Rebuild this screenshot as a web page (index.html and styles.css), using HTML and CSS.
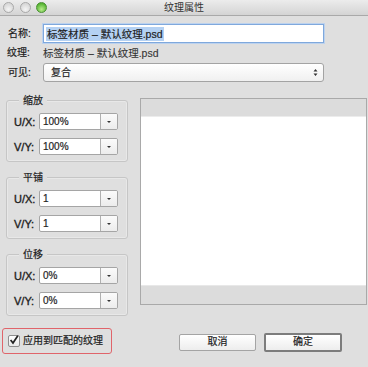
FILE: index.html
```html
<!DOCTYPE html>
<html lang="zh-CN">
<head>
<meta charset="utf-8">
<title>纹理属性</title>
<link rel="stylesheet" href="styles.css">
</head>
<body>
<div class="window">
  <div class="titlebar">
    <div class="lights">
      <span class="light grey"></span>
      <span class="light grey"></span>
      <span class="light green"></span>
    </div>
    <div class="title">纹理属性</div>
    <div></div>
  </div>

  <div class="form">
    <div class="row row-name">
      <span class="label">名称:</span>
      <div class="textfield"><span class="selected">标签材质 – 默认纹理.psd</span></div>
    </div>
    <div class="row row-texture">
      <span class="label">纹理:</span>
      <span class="value">标签材质 – 默认纹理.psd</span>
    </div>
    <div class="row row-visible">
      <span class="label">可见:</span>
      <div class="select">
        <span>复合</span>
        <svg class="updown" width="5" height="9" viewBox="0 0 5 9"><path d="M0.5 3.5 L2.5 1 L4.5 3.5 Z M0.5 5.5 L2.5 8 L4.5 5.5 Z" fill="#333"/></svg>
      </div>
    </div>
  </div>

  <div class="main">
    <div class="groups">
      <div class="group">
        <div class="legend">缩放</div>
        <div class="grow"><span class="glabel">U/X:</span><div class="combo"><span class="cval">100%</span><span class="cbtn"><i></i></span></div></div>
        <div class="grow"><span class="glabel">V/Y:</span><div class="combo"><span class="cval">100%</span><span class="cbtn"><i></i></span></div></div>
      </div>
      <div class="group">
        <div class="legend">平铺</div>
        <div class="grow"><span class="glabel">U/X:</span><div class="combo"><span class="cval">1</span><span class="cbtn"><i></i></span></div></div>
        <div class="grow"><span class="glabel">V/Y:</span><div class="combo"><span class="cval">1</span><span class="cbtn"><i></i></span></div></div>
      </div>
      <div class="group">
        <div class="legend">位移</div>
        <div class="grow"><span class="glabel">U/X:</span><div class="combo"><span class="cval">0%</span><span class="cbtn"><i></i></span></div></div>
        <div class="grow"><span class="glabel">V/Y:</span><div class="combo"><span class="cval">0%</span><span class="cbtn"><i></i></span></div></div>
      </div>
    </div>
    <div class="preview">
      <div class="pv-head"></div>
      <div class="pv-body"></div>
      <div class="pv-foot"></div>
    </div>
  </div>

  <div class="footer">
    <div class="highlight">
      <span class="checkbox"><svg width="10" height="10" viewBox="0 0 10 10"><path d="M1.6 5 L4 8 L8.8 0.8" fill="none" stroke="#222" stroke-width="1.7"/></svg></span>
      <span class="cblabel">应用到匹配的纹理</span>
    </div>
    <div class="buttons">
      <div class="btn">取消</div>
      <div class="btn default">确定</div>
    </div>
  </div>
</div>
</body>
</html>
```

FILE: styles.css
```css
html, body {
  margin: 0;
  padding: 0;
}
body {
  width: 368px;
  height: 367px;
  overflow: hidden;
  background: #dfdfdf;
  font-family: "Liberation Sans", "Noto Sans CJK SC", sans-serif;
  font-size: 10px;
  color: #1e1e1e;
  -webkit-text-stroke: 0.2px #1e1e1e;
}
.window {
  display: flex;
  flex-direction: column;
}

/* title bar */
.titlebar {
  height: 15px;
  border-bottom: 1px solid #a9a9a9;
  background: linear-gradient(#ececec, #d4d4d4);
  display: grid;
  grid-template-columns: 1fr auto 1fr;
  align-items: center;
}
.lights {
  display: flex;
  gap: 5.5px;
  padding-left: 3px;
}
.light {
  width: 11px;
  height: 11px;
  border-radius: 50%;
  box-sizing: border-box;
}
.light.grey {
  background: radial-gradient(circle at 50% 70%, #f4f4f4, #d8d8d8 70%);
  border: 1px solid #a9a9a9;
}
.light.green {
  background: radial-gradient(circle at 50% 70%, #b8ec8c, #54b330 75%);
  border: 1px solid #4a8f33;
}
.title {
  font-size: 10px;
  line-height: 12px;
  color: #333;
  -webkit-text-stroke: 0;
}

/* form rows */
.form {
  display: flex;
  flex-direction: column;
  padding-top: 8px;
}
.row {
  display: flex;
  align-items: center;
}
.label {
  width: 35px;
  padding-left: 8px;
  line-height: 12px;
}
.textfield {
  width: 281px;
  height: 19px;
  box-sizing: border-box;
  background: #fff;
  border: 1px solid #7fa8dc;
  box-shadow: 0 0 0 1px #bcd2ee;
  display: flex;
  align-items: center;
  padding-left: 2px;
}
.selected {
  background: #b4d1f3;
  line-height: 14px;
  font-size: 10.5px;
  padding: 0 1px;
}
.row-texture {
  margin-top: 1px;
  height: 17px;
}
.row-texture .label {
  padding-left: 7px;
  width: 36px;
}
.value {
  font-size: 10.5px;
  line-height: 12px;
  color: #333;
  -webkit-text-stroke: 0.1px #333;
}
.row-visible {
  margin-top: 2px;
}
.select {
  width: 281px;
  height: 19px;
  box-sizing: border-box;
  border: 1px solid #a3a3a3;
  border-radius: 3px;
  background: linear-gradient(#ffffff, #f0f0f0);
  display: flex;
  align-items: center;
  justify-content: space-between;
  padding: 0 5px 0 7px;
  line-height: 12px;
}
.updown {
  display: block;
}

/* main area */
.main {
  display: flex;
  margin-top: 16px;
  gap: 12px;
  padding-left: 6px;
}
.groups {
  width: 122px;
  margin-top: 2px;
  display: flex;
  flex-direction: column;
  gap: 15px;
}
.group {
  border: 1px solid #c6c6c6;
  border-radius: 3px;
  box-shadow: inset 0 0 0 1px #e8e8e8;
  height: 62px;
  box-sizing: border-box;
  display: flex;
  flex-direction: column;
}
.legend {
  align-self: flex-start;
  margin: -6px 0 0 12px;
  padding: 0 4px;
  background: #dfdfdf;
  line-height: 11px;
  height: 11px;
}
.grow {
  display: flex;
  align-items: center;
  margin-top: 7px;
  padding-left: 7px;
}
.grow + .grow {
  margin-top: 8px;
}
.glabel {
  width: 25px;
  font-size: 11px;
  line-height: 12px;
  -webkit-text-stroke: 0.35px #1e1e1e;
}
.combo {
  width: 79px;
  height: 17px;
  box-sizing: border-box;
  border: 1px solid #a5a5a5;
  border-radius: 2px;
  display: flex;
  background: #fff;
  overflow: hidden;
}
.cval {
  flex: 1;
  padding-left: 3px;
  line-height: 15px;
}
.cbtn {
  width: 16px;
  border-left: 1px solid #b0b0b0;
  background: linear-gradient(#fbfbfb, #ececec);
  display: flex;
  align-items: center;
  justify-content: center;
}
.cbtn i {
  width: 0;
  height: 0;
  border-left: 2px solid transparent;
  border-right: 2px solid transparent;
  border-top: 2px solid #333;
}

/* preview */
.preview {
  width: 227px;
  height: 207px;
  box-sizing: border-box;
  border: 1px solid #a9a9a9;
  display: flex;
  flex-direction: column;
}
.pv-head {
  height: 17px;
  background: #dcdcdc;
  border-bottom: 1px solid #ececec;
}
.pv-body {
  flex: 1;
  background: #fff;
}
.pv-foot {
  height: 18px;
  background: #dcdcdc;
  border-top: 1px solid #e8e8e8;
}

/* footer */
.footer {
  display: flex;
  align-items: center;
  margin-top: 12px;
  padding-left: 2px;
  padding-right: 26px;
}
.highlight {
  width: 110px;
  height: 26px;
  box-sizing: border-box;
  border: 1.5px solid #e0646a;
  border-radius: 3px;
  display: flex;
  align-items: center;
  padding-left: 5px;
  gap: 3px;
}
.checkbox {
  width: 12px;
  height: 12px;
  box-sizing: border-box;
  border: 1px solid #8e8e8e;
  border-radius: 2px;
  background: linear-gradient(#ffffff, #e9e9e9);
  display: flex;
  align-items: center;
  justify-content: center;
}
.checkbox svg {
  display: block;
  margin-top: -2px;
}
.cblabel {
  line-height: 12px;
}
.buttons {
  margin-left: auto;
  display: flex;
  gap: 8px;
  align-items: center;
  margin-top: 2px;
}
.btn {
  width: 77px;
  height: 17px;
  box-sizing: border-box;
  border: 1px solid #a4a4a4;
  border-radius: 2px;
  background: linear-gradient(#ffffff, #ededed);
  display: flex;
  align-items: center;
  justify-content: center;
  line-height: 12px;
}
.btn.default {
  width: 78px;
  height: 19px;
  border: 2px solid #7c7c7c;
}
```
